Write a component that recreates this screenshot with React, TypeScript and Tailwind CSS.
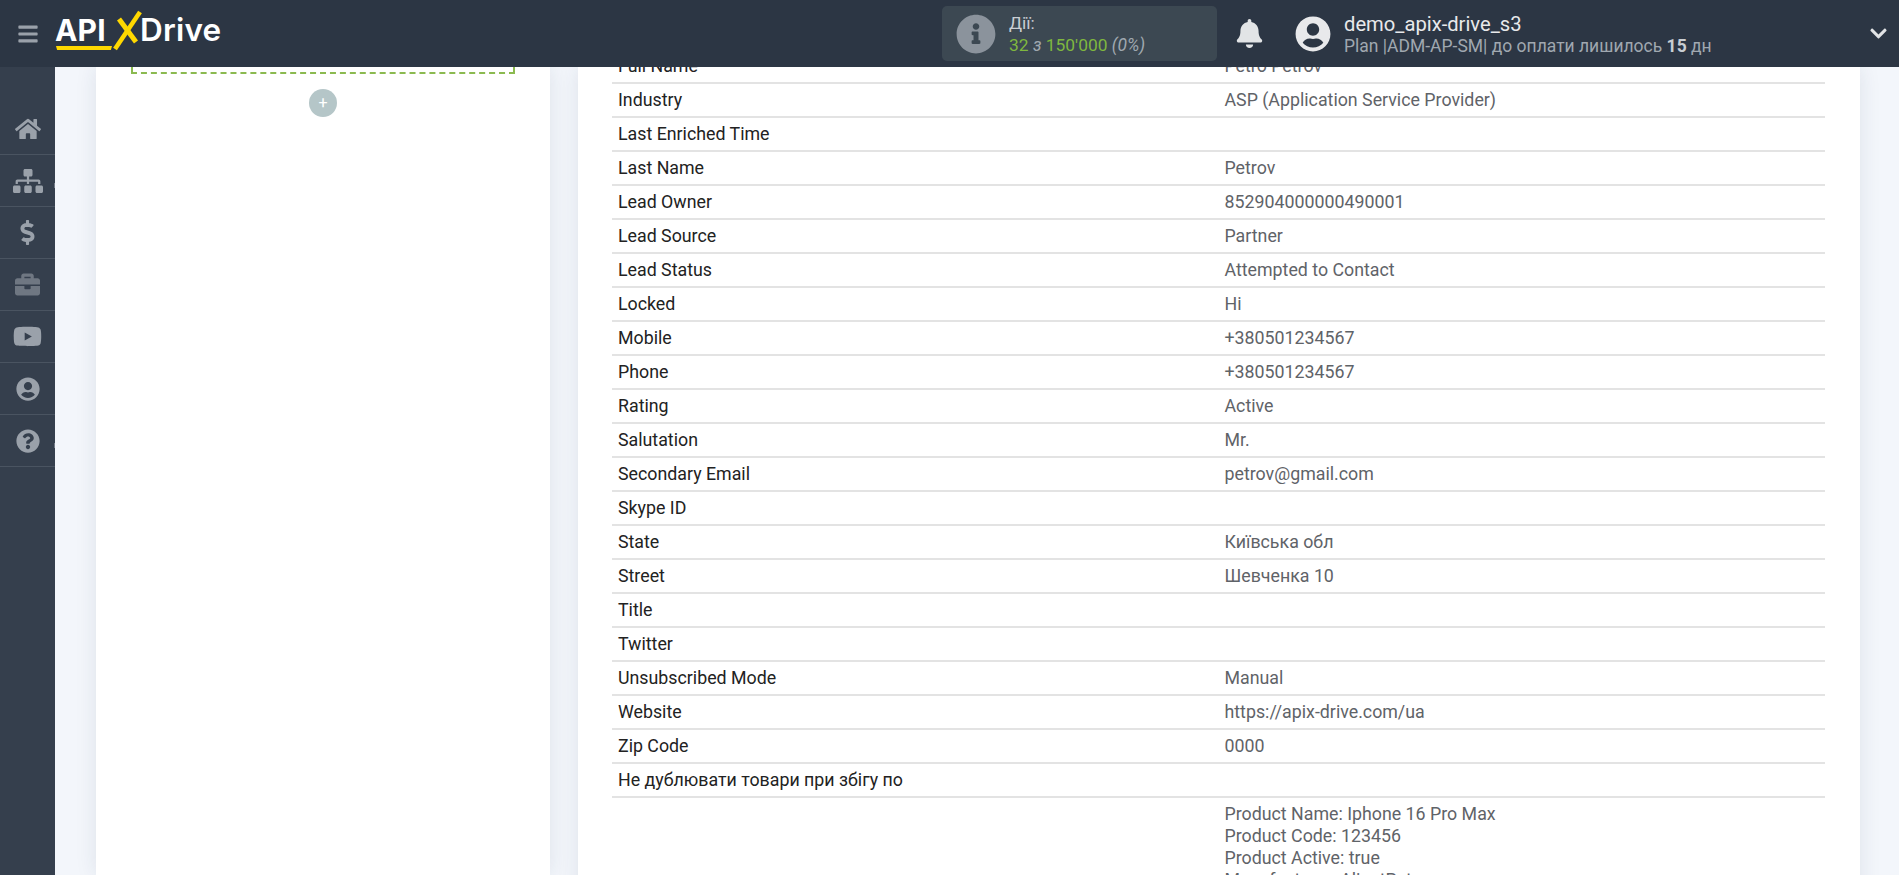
import { FaBars, FaBell, FaBriefcase, FaChevronDown, FaDollarSign, FaHome, FaInfoCircle, FaQuestionCircle, FaSitemap, FaUserCircle, FaYoutube } from "react-icons/fa";

const rows = [
    ["Full Name", "Petro Petrov"],
    ["Industry", "ASP (Application Service Provider)"],
    ["Last Enriched Time", ""],
    ["Last Name", "Petrov"],
    ["Lead Owner", "852904000000490001"],
    ["Lead Source", "Partner"],
    ["Lead Status", "Attempted to Contact"],
    ["Locked", "Hi"],
    ["Mobile", "+380501234567"],
    ["Phone", "+380501234567"],
    ["Rating", "Active"],
    ["Salutation", "Mr."],
    ["Secondary Email", "petrov@gmail.com"],
    ["Skype ID", ""],
    ["State", "Київська обл"],
    ["Street", "Шевченка 10"],
    ["Title", ""],
    ["Twitter", ""],
    ["Unsubscribed Mode", "Manual"],
    ["Website", "https://apix-drive.com/ua"],
    ["Zip Code", "0000"],
    ["Не дублювати товари при збігу по", ""],
];

const sideItems = [
    { icon: <FaHome size={26} />, dim: false, tick: false },
    { icon: <FaSitemap size={30} />, dim: false, tick: true },
    { icon: <FaDollarSign size={25} />, dim: false, tick: false },
    { icon: <FaBriefcase size={25} />, dim: true, tick: false },
    { icon: <FaYoutube size={29} />, dim: false, tick: false },
    { icon: <FaUserCircle size={24} />, dim: false, tick: false },
    { icon: <FaQuestionCircle size={24} />, dim: false, tick: true },
];

const Logo = () => (
    <div className="relative ml-[16px] h-[67px] w-[170px] font-['Inter',sans-serif] text-[30px] font-bold leading-[36px] text-white">
        <span className="absolute left-0 top-[12px] tracking-[0.2px]">API</span>
        <div className="absolute left-[1px] top-[46px] h-[4px] w-[56px] bg-[#ffd800] [clip-path:polygon(0_0,100%_0,98%_100%,2%_100%)]" />
        <svg className="absolute left-[56px] top-[10px]" width="34" height="42" viewBox="0 0 34 42">
            <line x1="29" y1="2" x2="4" y2="39" stroke="#ffd800" strokeWidth="4.5" />
            <line x1="8" y1="9" x2="25" y2="32" stroke="#ffd800" strokeWidth="5" />
        </svg>
        <span className="absolute left-[85px] top-[12px] text-[31.5px] font-semibold tracking-[0.2px]">Drive</span>
    </div>
);

const Header = () => (
    <header className="flex h-[67px] shrink-0 items-center bg-[#2c3644] font-['Roboto',sans-serif]">
        <FaBars size={22} className="ml-[17px] text-[#9aa1aa]" />
        <Logo />
        <div className="ml-[717px] flex h-[55px] w-[275px] items-center rounded-[5px] bg-[#3c4852] pl-[14px]">
            <FaInfoCircle size={40} className="text-[#8b939c]" />
            <div className="ml-[13px] text-[17.4px] leading-[22px]">
                <div className="text-[#c9ced3]">Дії:</div>
                <div className="text-[#7fb73f]">
                    32 <span className="italic text-[#a0a8b0]">з</span> 150'000 <span className="italic text-[#a0a8b0]">(0%)</span>
                </div>
            </div>
        </div>
        <FaBell size={29} className="ml-[18px] text-[#e2e4e6]" />
        <FaUserCircle size={36} className="ml-[31px] text-[#e8e9eb]" />
        <div className="ml-[13px]">
            <div className="text-[20.2px] leading-[24px] text-[#e8e9eb]">demo_apix-drive_s3</div>
            <div className="text-[17.5px] leading-[20px] text-[#a0a8b0]">
                Plan |ADM-AP-SM| до оплати лишилось <b className="font-bold text-[#c9ced3]">15</b> дн
            </div>
        </div>
        <FaChevronDown size={19} className="ml-auto mr-[11px] text-[#e2e4e6]" />
    </header>
);

const Sidebar = () => (
    <aside className="w-[55px] shrink-0 bg-[#353f4d] pt-[36px]">
        {sideItems.map((item, index) => (
            <div key={index} className="relative flex h-[52px] items-center justify-center border-b border-[#4a5461]">
                <span className={item.dim ? "text-[#6f7782]" : "text-[#9aa1aa]"}>{item.icon}</span>
                {item.tick && <div className="absolute right-0 top-[28px] h-[5px] w-[1px] bg-[#737b87]" />}
            </div>
        ))}
    </aside>
);

export default function App() {
    return (
        <div className="flex h-[875px] flex-col overflow-hidden bg-[#f3f6fb] font-['Roboto',sans-serif]">
            <Header />
            <div className="flex min-h-0 flex-1">
                <Sidebar />
                <main className="flex min-w-0 flex-1 gap-[28px] overflow-hidden pl-[41px] pr-[39px]">
                    <section className="w-[454px] shrink-0 bg-white shadow-[0_0_20px_rgba(30,50,80,0.1)]">
                        <div className="mx-[35px] h-[7px] border-x-2 border-b-2 border-dashed border-[#8bba50]" />
                        <div className="mx-auto mt-[15px] flex h-[28px] w-[28px] items-center justify-center rounded-full bg-[#b5c6c8] text-[16px] leading-none text-white">+</div>
                    </section>
                    <section className="h-[1000px] w-[1282px] shrink-0 bg-white pl-[34px] pr-[35px] shadow-[0_0_20px_rgba(30,50,80,0.1)]">
                        <div className="-mt-[17px] text-[17.8px] leading-[22px]">
                            {rows.map(([label, value]) => (
                                <div key={label} className="flex h-[34px] items-center border-b-2 border-[#e3e3e3]">
                                    <div className="w-1/2 pl-[6px] text-[#222222]">{label}</div>
                                    <div className="w-1/2 pl-[6px] text-[#5f6368]">{value}</div>
                                </div>
                            ))}
                            <div className="flex py-[5px]">
                                <div className="w-1/2" />
                                <div className="w-1/2 pl-[6px] text-[#5f6368]">
                                    <div>Product Name: Iphone 16 Pro Max</div>
                                    <div>Product Code: 123456</div>
                                    <div>Product Active: true</div>
                                    <div>Manufacturer: AlientPetrov</div>
                                </div>
                            </div>
                        </div>
                    </section>
                </main>
            </div>
        </div>
    );
}
